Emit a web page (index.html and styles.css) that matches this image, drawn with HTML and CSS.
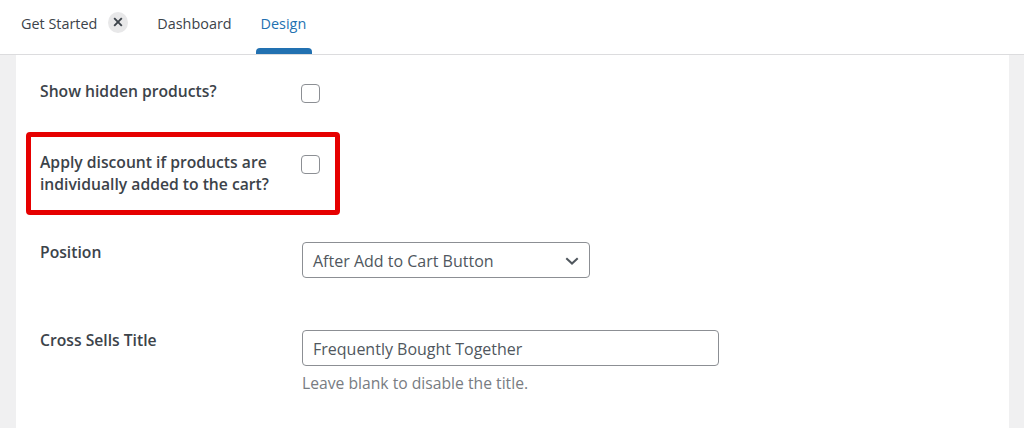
FILE: index.html
```html
<!DOCTYPE html>
<html lang="en">
<head>
    <meta charset="UTF-8">
    <meta name="viewport" content="width=device-width, initial-scale=1.0">
    <title>Design settings</title>
    <link rel="stylesheet" href="styles.css">
</head>
<body>
    <nav class="tabs">
        <a class="tab tab-started">Get Started
            <span class="tab-close">
                <svg width="10" height="10" viewBox="0 0 10 10"><path d="M1.2 1.2 8.8 8.8M8.8 1.2 1.2 8.8" stroke="#3c434a" stroke-width="1.9" fill="none"/></svg>
            </span>
        </a>
        <a class="tab">Dashboard</a>
        <a class="tab tab-active">Design</a>
    </nav>

    <main class="panel">
        <div class="row row-hidden">
            <div class="row-label">Show hidden products?</div>
            <div class="row-control"><span class="checkbox"></span></div>
        </div>

        <div class="row row-discount">
            <div class="row-label">Apply discount if products are individually added to the cart?</div>
            <div class="row-control"><span class="checkbox"></span></div>
            <div class="highlight"></div>
        </div>

        <div class="row row-position">
            <div class="row-label">Position</div>
            <div class="row-control">
                <div class="select">
                    <span>After Add to Cart Button</span>
                    <svg width="14" height="8" viewBox="0 0 14 8"><path d="M1.3 1.2 7 6.6 12.7 1.2" stroke="#50575e" stroke-width="2" fill="none"/></svg>
                </div>
            </div>
        </div>

        <div class="row row-title">
            <div class="row-label">Cross Sells Title</div>
            <div class="row-control">
                <div class="text-input">Frequently Bought Together</div>
                <p class="hint">Leave blank to disable the title.</p>
            </div>
        </div>
    </main>
</body>
</html>
```

FILE: styles.css
```css
html, body {
    height: 100%;
}
body {
    font-family: 'Open Sans', 'Noto Sans', sans-serif;
    font-size: 16px;
    color: #3c434a;
    background-color: #f0f0f1;
    margin: 0;
    overflow: hidden;
}
.tabs {
    display: flex;
    align-items: stretch;
    gap: 29px;
    height: 54px;
    padding-left: 21px;
    background-color: white;
    border-bottom: 1px solid #dcdcde;
    font-size: 14.4px;
}
.tab {
    position: relative;
    display: flex;
    align-items: center;
    height: 46px;
    color: #3c434a;
}
.tab-started {
    gap: 11px;
}
.tab-close {
    display: flex;
    align-items: center;
    justify-content: center;
    width: 20px;
    height: 21px;
    margin-top: -2px;
    border-radius: 50%;
    background-color: #e8e8e9;
}
.tab-active {
    color: #2271b1;
}
.tab-active::after {
    content: "";
    position: absolute;
    left: -5px;
    right: -6px;
    top: 48px;
    height: 6px;
    background-color: #2271b1;
    border-radius: 4px 4px 0 0;
}
.panel {
    margin: 0 15px 0 16px;
    height: calc(100% - 55px);
    padding-left: 24px;
    background-color: white;
}
.row {
    position: relative;
    display: flex;
}
.row-label {
    width: 262px;
    flex-shrink: 0;
    font-size: 15.7px;
    font-weight: 600;
    line-height: 22px;
}
.row-hidden {
    padding-top: 25px;
    height: 52px;
}
.row-discount {
    height: 91px;
    padding-top: 19px;
}
.row-discount .row-label {
    width: 240px;
    margin-right: 22px;
}
.row-position {
    height: 88px;
}
.row-position .row-label {
    margin-top: -1px;
}
.row-title .row-label {
    margin-top: -1px;
}
.checkbox {
    display: block;
    width: 17px;
    height: 17px;
    margin: 4px 0 0 -1px;
    border: 1px solid #8c8f94;
    border-radius: 4px;
    background-color: white;
}
.select, .text-input {
    display: flex;
    align-items: center;
    box-sizing: border-box;
    height: 36px;
    padding: 1px 0 0 10px;
    background-color: white;
    border: 1px solid #8c8f94;
    border-radius: 4px;
    color: #50575e;
}
.select {
    justify-content: space-between;
    width: 288px;
    padding-right: 10px;
}
.text-input {
    width: 417px;
}
.hint {
    margin: 6px 0 0;
    font-size: 15.7px;
    line-height: 22px;
    color: #787c82;
}
.highlight {
    position: absolute;
    left: -14px;
    top: 0;
    box-sizing: border-box;
    width: 314px;
    height: 83px;
    border: 5px solid #e60000;
    border-radius: 4px;
}
```
